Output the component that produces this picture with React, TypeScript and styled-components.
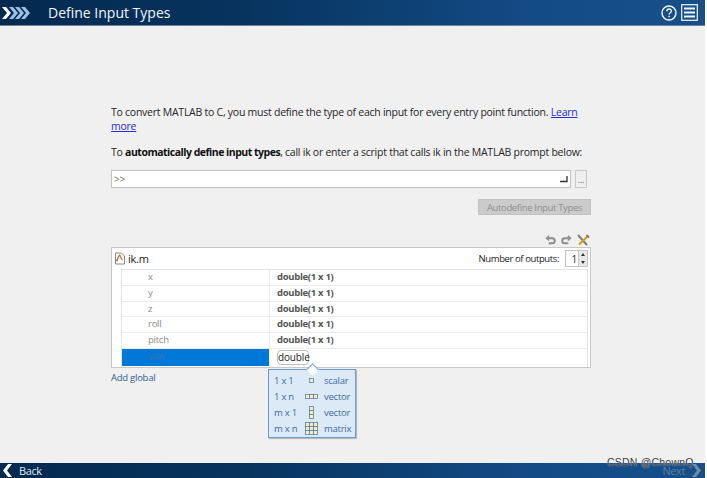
import React from "react";
import styled, { createGlobalStyle } from "styled-components";

const Global = createGlobalStyle`
  html, body { margin: 0; padding: 0; background: #fff; }
  #root { width: 707px; height: 478px; overflow: hidden; }
  * { box-sizing: border-box; }
`;
const Page = styled.div`
  position: relative; width: 707px; height: 478px; display: flex; flex-direction: column;
  background: #f0f0f0; font-family: "Open Sans", "Noto Sans", sans-serif; color: #222; font-size: 10.5px;
  letter-spacing: -0.25px; border-right: 2px solid #fff;
`;
const Header = styled.header`
  height: 26px; flex: none; display: flex; align-items: center; padding: 0 7px 0 2px;
  background: linear-gradient(90deg, #04294f 0%, #07345f 35%, #134b86 75%, #174f8b 100%);
  border-bottom: 1px solid #6f8296;
`;
const Title = styled.h1`
  margin: 0 0 1px 16px; font-size: 14px; font-weight: 400; color: #f2f6fa; letter-spacing: 0; flex: 1;
`;
const HeaderIcons = styled.div`display: flex; align-items: center; gap: 4px;`;
const Main = styled.main`
  flex: 1; display: flex; flex-direction: column; padding: 80px 114px 0 111px; position: relative;
`;
const Para = styled.p`
  margin: 0; line-height: 13.5px; width: 472px; color: #262626;
  b { font-weight: 700; color: #111; letter-spacing: -0.5px; }
`;
const Second = styled(Para)`margin-top: 12.5px; white-space: nowrap;`;
const Link = styled.a`color: #2a2ae0; text-decoration: underline;`;
const PromptRow = styled.div`display: flex; gap: 4px; margin-top: 11px; height: 18px; padding-right: 4px;`;
const Prompt = styled.div`
  flex: 1; background: #fff; border: 1px solid #c4c4c4; display: flex; align-items: center;
  justify-content: space-between; padding: 0 2px 0 2px; color: #777; font-size: 10px; box-shadow: 0 0 1px #ddd;
`;
const Dots = styled.div`
  width: 12px; background: #efefef; border: 1px solid #c8c8c8; color: #666; font-size: 9px;
  display: flex; align-items: center; justify-content: center; line-height: 1;
`;
const ActionRow = styled.div`display: flex; justify-content: flex-end; margin-top: 11px;`;
const DisabledButton = styled.div`
  width: 113px; height: 16px; background: #cbcbcb; border: 1px solid #c2c2c2; color: #8f8f8f; letter-spacing: -0.35px;
  font-size: 9.5px; display: flex; align-items: center; justify-content: center;
`;
const ToolRow = styled.div`
  display: flex; justify-content: flex-end; align-items: center; gap: 5px; height: 12px; margin-top: 19px; margin-bottom: 1px; padding-right: 1px;
`;
const Panel = styled.section`
  height: 121px; background: #fff; border: 1px solid #c9c9c9; display: flex; flex-direction: column; padding: 0 2px 0 9px;
`;
const PanelHead = styled.div`
  height: 21px; display: flex; align-items: center; margin-left: -7px; gap: 2px;
`;
const FileName = styled.span`flex: 1; font-size: 11px; color: #222;`;
const OutputsLabel = styled.span`font-size: 9.5px; color: #222; margin-right: 4px; letter-spacing: -0.4px;`;
const Spinner = styled.div`
  width: 23px; height: 17px; border: 1px solid #c4c4c4; background: #fff; display: flex; font-size: 10px; align-items: center;
`;
const SpinVal = styled.span`flex: 1; text-align: right; padding-right: 1px;`;
const SpinBtns = styled.div`width: 9px; height: 100%; display: flex; flex-direction: column; background: #e8e8e8; border-left: 1px solid #c4c4c4;`;
const SpinBtn = styled.div<{ $up?: boolean }>`
  flex: 1; display: flex; align-items: center; justify-content: center;
  &::before { content: ""; border-left: 2.5px solid transparent; border-right: 2.5px solid transparent;
    ${(p) => (p.$up ? "border-bottom: 3px solid #333;" : "border-top: 3px solid #333;")} }
`;
const Table = styled.div`border: 1px solid #e4e4e4; border-bottom: none; flex: 1; display: flex; flex-direction: column;`;
const Row = styled.div`
  height: 15.8px; display: grid; grid-template-columns: 148px 1fr; border-bottom: 1px solid #ececec; align-items: stretch;
  &:last-child { border-bottom: none; height: 17px; }
`;
const NameCell = styled.div<{ $selected?: boolean }>`
  padding-left: 26px; font-size: 9.5px; line-height: 14px; color: ${(p) => (p.$selected ? "#3f73ad" : "#8a8a8a")};
  background: ${(p) => (p.$selected ? "#0078d7" : "transparent")};
  border-right: 1px solid ${(p) => (p.$selected ? "#fff" : "#ececec")};
`;
const TypeCell = styled.div`padding-left: 7px; font-size: 9.5px; line-height: 14px; font-weight: 700; color: #555; letter-spacing: -0.3px;`;
const TypeInput = styled.div`
  margin: 1px 0 0 7px; width: 32px; height: 15px; border: 1px solid #bbb; border-radius: 4px; background: #fff;
  font-size: 10px; line-height: 13px; text-align: center; color: #222; letter-spacing: -0.15px;
`;
const AddGlobal = styled.a`display: block; margin-top: 3px; color: #2f5f92; font-size: 9.5px; line-height: 13px;`;
const Popup = styled.div`
  position: absolute; left: 268px; top: 343px; width: 88px; height: 69px; background: #dce9f7; border: 1px solid #6b9cc9;
  box-shadow: 1px 1px 1px #bbb; display: flex; flex-direction: column; padding: 2px 0 0 5px;
  &::before { content: ""; position: absolute; left: 39px; top: -5px; width: 8px; height: 8px; background: #fff;
    border-left: 1px solid #6b9cc9; border-top: 1px solid #6b9cc9; transform: rotate(45deg); }
`;
const PopRow = styled.div`
  height: 16px; display: grid; grid-template-columns: 25px 19px 1fr; align-items: center; font-size: 9.5px; color: #3f6d9c; column-gap: 3px;
`;
const IconCell = styled.div`display: flex; justify-content: center; align-items: center;`;
const Footer = styled.footer`
  height: 15px; flex: none; display: flex; align-items: center; justify-content: space-between; padding: 0 3px 0 2px;
  background: linear-gradient(90deg, #04294f 0%, #07345f 35%, #134b86 75%, #174f8b 100%);
`;
const FootBtn = styled.div<{ $disabled?: boolean }>`
  display: flex; align-items: center; gap: 6px; font-size: 11px; letter-spacing: -0.4px; color: ${(p) => (p.$disabled ? "#5f7f9f" : "#dfe8f0")};
`;
const Watermark = styled.div`
  position: absolute; left: 607px; top: 456px; font-size: 10.5px; color: #3a3a3a; letter-spacing: 0.2px; white-space: nowrap;
  font-family: "Liberation Sans", sans-serif; text-shadow: 0 0 1px #fff;
`;

const Chevrons = () => (
  <svg width="30" height="14" viewBox="0 0 30 14">
    <path d="M0 1h4l5 6-5 6H0l5-6z" fill="#fff" />
    {[7, 13, 19].map((x) => (
      <path key={x} d={`M${x} 1h4l5 6-5 6h-4l5-6z`} fill="#9cc0e8" />
    ))}
  </svg>
);
const Help = () => (
  <svg width="16" height="16" viewBox="0 0 16 16" fill="none" stroke="#f4f7fa" strokeWidth="1.4">
    <circle cx="8" cy="8" r="7" />
    <path d="M5.8 6.3c0-3 4.6-3 4.6-.2 0 1.700-2.300 1.700-2.300 3.500" />
    <path d="M8.100 10.700v1.500" />
  </svg>
);
const Menu = () => (
  <svg width="17" height="17" viewBox="0 0 17 17" fill="none" stroke="#f4f7fa">
    <rect x="0.700" y="0.700" width="15.600" height="15.600" strokeWidth="1.200" />
    <path d="M3 4.500h11M3 8.500h11M3 12.500h11" strokeWidth="2" />
  </svg>
);
const Enter = () => (
  <svg width="9" height="7" viewBox="0 0 9 7" fill="none" stroke="#333" strokeWidth="1.300">
    <path d="M8 0v5.500H1" />
  </svg>
);
const Undo = ({ flip }: { flip?: boolean }) => (
  <svg width="11" height="10" viewBox="0 0 12 10" fill="none" stroke="#8c8c8c" strokeWidth="2.200"
    style={flip ? { transform: "scaleX(-1)" } : undefined}>
    <path d="M3 3h5c3.500 0 3.500 5.500 0 5.500H4" />
    <path d="M4.500 0.500L1.500 3l3 2.500" strokeWidth="1.500" />
  </svg>
);
const Tools = () => (
  <svg width="13" height="12" viewBox="0 0 13 12" fill="none">
    <path d="M1 1l9 10" stroke="#7d7d7d" strokeWidth="2" />
    <path d="M11.500 1.500L2 10.500" stroke="#c9a020" strokeWidth="2" />
    <path d="M9.500 1l2.500 2.500" stroke="#666" strokeWidth="1.500" />
  </svg>
);
const FileIcon = () => (
  <svg width="12" height="13" viewBox="0 0 12 13" fill="none">
    <path d="M1.500 1h6l3 3v8h-9z" fill="#fff" stroke="#8a8a8a" />
    <path d="M2 9c2-1 2-5 3.500-6 1 1 1.500 4 3 5" stroke="#d9722a" strokeWidth="1.300" />
    <path d="M2 8l2 1" stroke="#3a78b8" />
  </svg>
);
const GridIcon = ({ cols, rows }: { cols: number; rows: number }) => {
  const s = 4;
  const w = cols * s + 1, h = rows * s + 1;
  return (
    <svg width={w} height={h} viewBox={`0 0 ${w} ${h}`}>
      {Array.from({ length: rows }).flatMap((_, r) =>
        Array.from({ length: cols }).map((_, c) => (
          <rect key={`${r}-${c}`} x={c * s + 0.500} y={r * s + 0.500} width={s} height={s} fill="#f3ecc8" stroke="#5f7f9f" strokeWidth="0.800" />
        ))
      )}
    </svg>
  );
};
const Arrow = ({ right, color }: { right?: boolean; color: string }) => (
  <svg width="11" height="13" viewBox="0 0 11 13">
    <path d={right ? "M1 0h4l5 6.500L5 13H1l5-6.500z" : "M10 0H6L1 6.500 6 13h4L5 6.500z"} fill={color} />
  </svg>
);

const rows = ["x", "y", "z", "roll", "pitch"];
const pop = [
  { dim: "1 x 1", cols: 1, rows: 1, label: "scalar" },
  { dim: "1 x n", cols: 3, rows: 1, label: "vector" },
  { dim: "m x 1", cols: 1, rows: 3, label: "vector" },
  { dim: "m x n", cols: 3, rows: 3, label: "matrix" },
];

export default function App() {
  return (
    <Page>
      <Global />
      <Header>
        <Chevrons />
        <Title>Define Input Types</Title>
        <HeaderIcons><Help /><Menu /></HeaderIcons>
      </Header>
      <Main>
        <Para>
          To convert MATLAB to C, you must define the type of each input for every entry point function. <Link>Learn more</Link>
        </Para>
        <Second>To <b>automatically define input types</b>, call ik or enter a script that calls ik in the MATLAB prompt below:</Second>
        <PromptRow>
          <Prompt><span>&gt;&gt;</span><Enter /></Prompt>
          <Dots>...</Dots>
        </PromptRow>
        <ActionRow><DisabledButton>Autodefine Input Types</DisabledButton></ActionRow>
        <ToolRow><Undo /><Undo flip /><Tools /></ToolRow>
        <Panel>
          <PanelHead>
            <FileIcon />
            <FileName>ik.m</FileName>
            <OutputsLabel>Number of outputs:</OutputsLabel>
            <Spinner>
              <SpinVal>1</SpinVal>
              <SpinBtns><SpinBtn $up /><SpinBtn /></SpinBtns>
            </Spinner>
          </PanelHead>
          <Table>
            {rows.map((r) => (
              <Row key={r}><NameCell>{r}</NameCell><TypeCell>double(1 x 1)</TypeCell></Row>
            ))}
            <Row><NameCell $selected>yaw</NameCell><TypeInput>double</TypeInput></Row>
          </Table>
        </Panel>
        <AddGlobal>Add global</AddGlobal>
        <Popup>
          {pop.map((p) => (
            <PopRow key={p.dim + p.label}>
              <span>{p.dim}</span>
              <IconCell><GridIcon cols={p.cols} rows={p.rows} /></IconCell>
              <span>{p.label}</span>
            </PopRow>
          ))}
        </Popup>
      </Main>
      <Footer>
        <FootBtn><Arrow color="#fff" />Back</FootBtn>
        <FootBtn $disabled>Next<Arrow right color="#6f8aa5" /></FootBtn>
      </Footer>
      <Watermark>CSDN @ChownQ</Watermark>
    </Page>
  );
}
